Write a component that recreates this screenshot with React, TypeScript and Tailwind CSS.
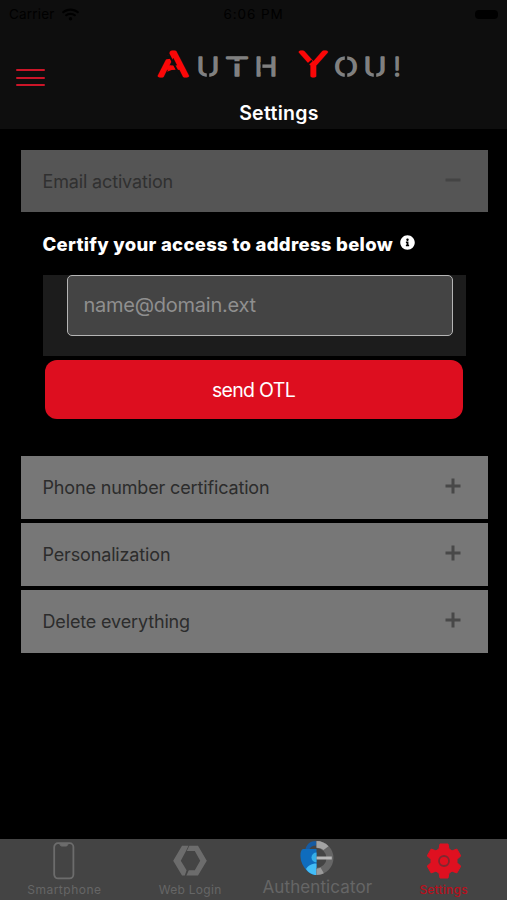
import React from "react";
import { FaInfoCircle, FaWifi } from "react-icons/fa";

type Panel = { id: number; title: string };

const panels: Panel[] = [
  { id: 1, title: "Phone number certification" },
  { id: 2, title: "Personalization" },
  { id: 3, title: "Delete everything" },
];

const letters = [
  { char: "U", x: 198.5, width: 19 },
  { char: "T", x: 227, width: 20 },
  { char: "H", x: 256.5, width: 19 },
  { char: "O", x: 336, width: 20 },
  { char: "U", x: 365.5, width: 19 },
];

function Logo() {
  return (
    <svg width="250" height="46" viewBox="154 40 250 46" className="block">
      <g fontFamily="Inter, sans-serif" strokeLinejoin="round">
        <g
          fill="#808080"
          stroke="#808080"
          strokeWidth="1.6"
          fontSize="25.5"
          fontWeight="300"
        >
          {letters.map((l, i) => (
            <text
              key={i}
              x={l.x - 2}
              y="76.3"
              textLength={l.width + 4}
              lengthAdjust="spacingAndGlyphs"
            >
              {l.char}
            </text>
          ))}
          <text x="393.5" y="76.3">!</text>
        </g>
        <g
          fill="#fb0707"
          stroke="#fb0707"
          strokeWidth="2.8"
          fontSize="32"
          fontWeight="200"
        >
          <text x="158" y="75.8" textLength="30" lengthAdjust="spacingAndGlyphs">A</text>
          <text x="299" y="75.8" textLength="28" lengthAdjust="spacingAndGlyphs">Y</text>
        </g>
      </g>
      {/* stencil cuts */}
      <g stroke="#0e0e0e" strokeWidth="2.4" fill="none">
        <path d="M208 71v8M230 62.4h14M346 54v8M346 72v8M375 71v8" />
        <path d="M261.5 62v10" strokeWidth="1.8" />
        <path d="M167.5 52l13 25" strokeWidth="2" />
        <path d="M163 58l7-1" strokeWidth="3.5" />
        <path d="M305 67l7-6.5" strokeWidth="1.8" />
      </g>
      <path d="M167 71.8l3.5-6.5 4.5 3.5z" fill="#fb0707" />
    </svg>
  );
}

function ToggleSign({ open }: { open?: boolean }) {
  return (
    <svg
      width="16"
      height="16"
      viewBox="0 0 16 16"
      fill="none"
      strokeWidth="3"
      className={open ? "stroke-[#444]" : "stroke-[#484848]"}
    >
      <path d="M.5 8h15" />
      {!open && <path d="M8 .5v15" />}
    </svg>
  );
}

function PanelHeader({ title, open }: { title: string; open?: boolean }) {
  return (
    <div
      className={
        open
          ? "flex h-[62px] items-center justify-between bg-[#555] pl-[22px] pr-[26.5px] text-[#303030]"
          : "flex h-[62.5px] items-center justify-between bg-[#777] pl-[22px] pr-[26.5px] text-[#2c2c2c]"
      }
    >
      <span className="text-[18px] tracking-[-0.15px]">{title}</span>
      <div className={open ? "pb-[2px]" : "pb-[3px]"}>
        <ToggleSign open={open} />
      </div>
    </div>
  );
}

function SmartphoneIcon() {
  return (
    <svg width="22" height="38" viewBox="0 0 22 38" fill="none" stroke="#6c6c6c">
      <rect x="1.2" y="1.2" width="19.2" height="35.2" rx="3.8" strokeWidth="1.8" />
      <path d="M6 1.5c.7 0 1 .6 1.2 1.3.2.8.7 1.2 1.5 1.2h4.4c.8 0 1.3-.4 1.5-1.2.2-.7.5-1.3 1.2-1.3z" fill="#6c6c6c" />
    </svg>
  );
}

function WebLoginIcon() {
  return (
    <svg width="34" height="32" viewBox="0 0 34 32" fill="#6c6c6c">
      <path d="M9 .8h6.5L13 6 7.8 15.8l5.8 9.5-1.8 5.2H9L.2 15.8z" />
      <path d="M16.3.8H25l8.8 15L25 30.6H13.4l2.4-5.3h6l5.4-9.5L21.8 6h-8z" />
    </svg>
  );
}

function AuthenticatorIcon() {
  return (
    <svg width="34" height="36" viewBox="0 0 34 36">
      <path d="M16.5 1C10 1 6.3 4.3 5.3 10H9c1-3.2 3.7-4.5 7.5-4.5z" fill="#155ba3" />
      <path d="M3 9h13.5v26C9 35 4 28.5 1.5 22 0 17.5-.2 10 3 9z" fill="#0f6cbd" />
      <path d="M16.5 12.5a5 5 0 0 0 0 10z" fill="#35aee8" />
      <path d="M16.5 23.5C11 23.5 7.5 26 6 29c2.4 3.5 5.9 6 10.5 6z" fill="#43bdf7" />
      <path d="M16.5 1a17 17 0 0 1 0 34v-7a10 10 0 0 0 0-20z" fill="#666" />
      <path d="M16.5 1c5 0 9 2 12 5.3L23.5 10c-2-1.5-4.2-2.2-7-2.2z" fill="#a3a3a3" />
      <path d="M16.5 28.7c1.6 0 2.7-.4 4-1.1l3.3 5.7c-2 1.2-4.5 1.7-7.3 1.7z" fill="#999" />
      <path d="M16.5 16.5h15.3v3H16.5z" fill="#b7b7b7" />
    </svg>
  );
}

function SettingsIcon() {
  return (
    <svg width="34" height="36" viewBox="0 0 34 36">
      <path
        d="M13 1h8l1 5 3.1 1.8 4.8-1.7 3.9 6.8-3.8 3.3v3.6l3.8 3.3-3.9 6.8-4.8-1.7L22 30l-1 5h-8l-1-5-3.1-1.8-4.8 1.7-3.9-6.8L4 19.8v-3.6L.2 12.9l3.9-6.8 4.8 1.7L12 6z"
        fill="#df1020"
        stroke="#df1020"
        strokeLinejoin="round"
      />
      <circle cx="17" cy="18" r="5" fill="none" stroke="#7e2830" strokeWidth="1.8" />
    </svg>
  );
}

export default function App() {
  return (
    <div className="flex h-[900px] w-[507px] flex-col overflow-hidden bg-black font-[Inter,sans-serif]">
      <header className="flex h-[128.5px] shrink-0 flex-col bg-[#0e0e0e]">
        <div className="grid h-[28px] grid-cols-3 items-center px-[9px] text-[13.5px] text-black">
          <div className="flex items-center gap-[7px]">
            <span className="tracking-[0.2px]">Carrier</span>
            <FaWifi className="text-[17px]" />
          </div>
          <span className="text-center tracking-[0.9px]">6:06 PM</span>
          <span className="h-[9px] w-[23px] justify-self-end rounded-[4px] bg-black" />
        </div>
        <div className="flex pt-[12px] pl-[16px]">
          <button className="mt-[29px] flex h-[17px] w-[29px] flex-col justify-between">
            <span className="h-[2px] w-full rounded bg-[#cc1528]" />
            <span className="h-[2px] w-full rounded bg-[#cc1528]" />
            <span className="h-[2px] w-full rounded bg-[#cc1528]" />
          </button>
          <div className="ml-[109px]">
            <Logo />
          </div>
        </div>
        <h1 className="mt-[14.5px] pl-[51px] text-center text-[19.5px] leading-[24px] font-semibold tracking-[0.3px] text-white">
          Settings
        </h1>
      </header>

      <main className="flex-1 pt-[21.5px] pr-[19.5px] pl-[20.5px]">
        <PanelHeader title="Email activation" open />
        <div className="h-[244px] px-[22px] pt-[20px]">
          <div className="flex h-[25px] items-center gap-[7px] text-white">
            <span className="text-[18.5px] font-extrabold tracking-[0.3px] whitespace-nowrap">
              Certify your access to address below
            </span>
            <FaInfoCircle className="mb-1 shrink-0 text-[15px]" />
          </div>
          <div className="mt-[17.5px] h-[81px] bg-[#1c1c1c] pr-[12.5px] pl-[24px]">
            <input
              type="text"
              placeholder="name@domain.ext"
              className="block h-[61px] w-full rounded-[5px] border-[1.5px] border-[#b5b5b5] bg-[#444] px-4 text-[20px] tracking-[-0.25px] placeholder:text-[#8f8f8f]"
            />
          </div>
          <button className="mx-[2px] mt-[4.5px] h-[58.5px] w-[418px] rounded-[12px] bg-[#dd0e1f] pt-[2px] text-[19.5px] tracking-[-0.7px] text-white">
            send OTL
          </button>
        </div>
        <div className="flex flex-col gap-[4.7px]">
          {panels.map((panel) => (
            <PanelHeader key={panel.id} title={panel.title} />
          ))}
        </div>
      </main>

      <nav className="grid h-[61.5px] shrink-0 grid-cols-4 bg-[#444] text-[#666]">
        <div className="flex flex-col items-center pt-[3px] pl-[2px]">
          <SmartphoneIcon />
          <span className="mt-[2px] text-[12px] leading-[16px] tracking-[0.5px]">Smartphone</span>
        </div>
        <div className="flex flex-col items-center pt-[6px]">
          <WebLoginIcon />
          <span className="mt-[5px] text-[12px] leading-[16px] tracking-[0.3px]">Web Login</span>
        </div>
        <div className="flex flex-col items-center pt-[1.5px] pl-[1px]">
          <AuthenticatorIcon />
          <span className="mt-[1px] text-[17px] leading-[20px] tracking-[0.1px]">Authenticator</span>
        </div>
        <div className="flex flex-col items-center pt-[4px]">
          <SettingsIcon />
          <span className="mt-[3px] text-[12px] leading-[16px] font-medium tracking-[0.2px] text-[#b8101d]">Settings</span>
        </div>
      </nav>
    </div>
  );
}
